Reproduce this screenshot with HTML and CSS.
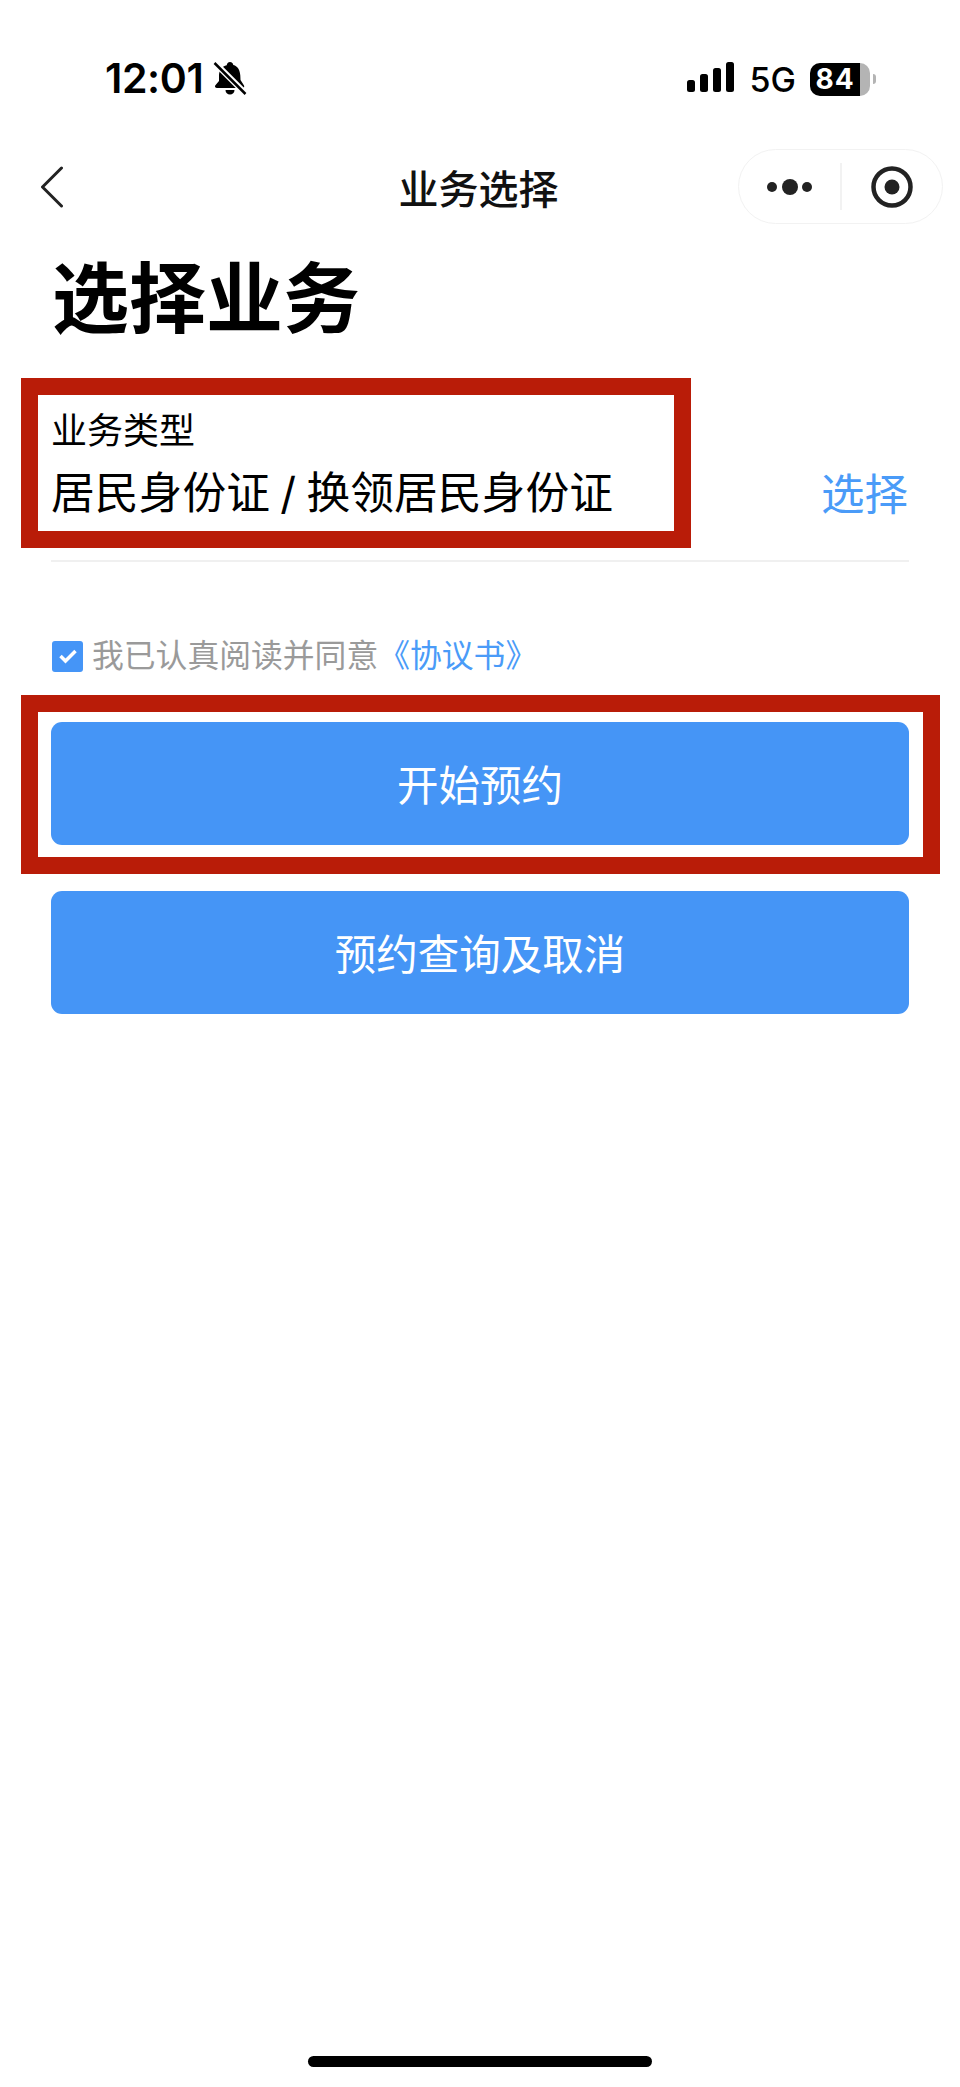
FILE: index.html
```html
<!DOCTYPE html>
<html lang="zh-CN">
<head>
<meta charset="utf-8">
<title>业务选择</title>
<link rel="stylesheet" href="styles.css">
</head>
<body>
<div class="page">
  <header class="status">
    <div class="status-left">
      <span class="time">12:01</span>
      <svg class="bell" width="34" height="35" viewBox="0 0 34 35">
        <path class="fill" d="M17 1c2 0 3 1.400 3.300 3 4.700 1.300 6.700 5.500 7 10.500l.2 4.500 3.500 5.500c.6 1.200 0 2.500-1.500 2.500H4c-1.500 0-2.500-1.300-1.800-2.500L6 20v-6c.3-5 3-8.600 7.700-9.800C14 2.400 15 1 17 1z"/>
        <path class="fill" d="M12.500 29h9c0 2.800-2 4.600-4.500 4.600s-4.500-1.800-4.500-4.600z"/>
        <path class="cut" d="M-1 -1 34 34"/>
        <path class="slash" d="M1.500 2 32.500 33"/>
      </svg>
    </div>
    <div class="status-right">
      <svg class="signal" width="48" height="30" viewBox="0 0 48 30">
        <rect x="0" y="18" width="8" height="12" rx="2.500"/>
        <rect x="13" y="12" width="8" height="18" rx="2.500"/>
        <rect x="26" y="6" width="8" height="24" rx="2.500"/>
        <rect x="39" y="0" width="8" height="30" rx="2.500"/>
      </svg>
      <span class="net">5G</span>
      <div class="battery">
        <div class="battery-body"><span class="battery-level">84</span></div>
        <span class="battery-tip"></span>
      </div>
    </div>
  </header>

  <nav class="nav">
    <div class="nav-left">
      <svg class="back" width="24" height="42" viewBox="0 0 24 42">
        <path d="M21.500 2 2.500 21 21.500 40"/>
      </svg>
    </div>
    <div class="nav-title">业务选择</div>
    <div class="nav-right">
      <div class="capsule">
        <div class="capsule-cell capsule-cell-menu">
          <svg width="46" height="20" viewBox="0 0 46 20">
            <circle cx="5" cy="10" r="5"/>
            <circle cx="23" cy="10" r="8"/>
            <circle cx="40" cy="10" r="5"/>
          </svg>
        </div>
        <span class="capsule-divider"></span>
        <div class="capsule-cell">
          <svg class="target" width="42" height="42" viewBox="0 0 42 42">
            <circle class="ring" cx="21" cy="21" r="18.500"/>
            <circle cx="21" cy="21" r="7.500"/>
          </svg>
        </div>
      </div>
    </div>
  </nav>

  <main class="content">
    <h1 class="heading">选择业务</h1>

    <section class="field">
      <div class="field-main">
        <div class="field-label">业务类型</div>
        <div class="field-value">居民身份证 / 换领居民身份证</div>
      </div>
      <a class="field-action">选择</a>
    </section>

    <label class="agree">
      <span class="checkbox">
        <svg width="20" height="16" viewBox="0 0 20 16"><path d="M2.500 8 7.500 13 17.500 3"/></svg>
      </span>
      <span class="agree-text">我已认真阅读并同意<a class="agree-link">《协议书》</a></span>
    </label>

    <button class="btn btn-first">开始预约</button>
    <button class="btn btn-second">预约查询及取消</button>
  </main>

  <div class="home-bar"></div>

  <div class="mark mark-field"></div>
  <div class="mark mark-button"></div>
</div>
</body>
</html>
```

FILE: styles.css
```css
* { box-sizing: border-box; }

html, body {
  margin: 0;
  padding: 0;
  background: #fff;
}

.page {
  position: relative;
  width: 960px;
  height: 2087px;
  overflow: hidden;
  display: flex;
  flex-direction: column;
  background: #fff;
  color: #000;
  font-family: "Inter", "Noto Sans CJK SC", sans-serif;
}

/* status bar */
.status {
  height: 149px;
  flex: none;
  display: flex;
  justify-content: space-between;
  align-items: flex-start;
  padding: 58px 84px 0 105px;
}

.status-left,
.status-right {
  display: flex;
  align-items: center;
  height: 40px;
}

.time {
  font-size: 41px;
  font-weight: 600;
  line-height: 40px;
  letter-spacing: -0.4px;
}

.bell {
  margin-left: 10px;
}

.bell .fill { fill: #000; }
.bell .cut { stroke: #fff; stroke-width: 6; fill: none; }
.bell .slash { stroke: #000; stroke-width: 2.500; fill: none; }

.signal {
  fill: #000;
  margin-top: -2px;
}

.net {
  font-family: "Inter", sans-serif;
  font-size: 34px;
  font-weight: 500;
  line-height: 40px;
  margin-left: 15px;
  margin-top: 4px;
}

.battery {
  display: flex;
  align-items: center;
  margin-left: 14px;
  margin-top: 2px;
}

.battery-body {
  width: 60px;
  height: 33px;
  border-radius: 10px;
  background: linear-gradient(to right, #000 50px, #b4b4b4 50px);
  overflow: hidden;
}

.battery-level {
  display: block;
  width: 50px;
  text-align: center;
  color: #fff;
  font-size: 28px;
  font-weight: 700;
  line-height: 33px;
  letter-spacing: 1px;
}

.battery-tip {
  width: 3px;
  height: 10px;
  margin-left: 3px;
  background: #b4b4b4;
  border-radius: 0 3px 3px 0;
}

/* mini program nav */
.nav {
  height: 75px;
  flex: none;
  display: grid;
  grid-template-columns: 1fr auto 1fr;
  align-items: center;
  padding: 0 17px 0 40px;
}

.back {
  display: block;
  fill: none;
  stroke: #222;
  stroke-width: 3;
  stroke-linecap: round;
  stroke-linejoin: round;
}

.nav-title {
  font-size: 40px;
  font-weight: 500;
  line-height: 69px;
  padding-top: 6px;
  color: #111;
  margin-right: 26px;
}

.nav-right {
  display: flex;
  justify-content: flex-end;
}

.capsule {
  width: 205px;
  height: 75px;
  border: 1px solid #f2f2f2;
  border-radius: 38px;
  display: flex;
  align-items: center;
}

.capsule-cell {
  flex: 1;
  display: flex;
  justify-content: center;
  align-items: center;
}

.capsule-cell-menu {
  padding-left: 1px;
}

.capsule-cell svg {
  display: block;
  fill: #222;
}

.capsule-divider {
  width: 2px;
  height: 47px;
  background: #f2f2f2;
}

.capsule-cell .ring {
  fill: none;
  stroke: #222;
  stroke-width: 4.500;
}

/* content */
.content {
  flex: 1;
  display: flex;
  flex-direction: column;
  padding: 0 51px;
}

.heading {
  margin: 25px 0 0 1px;
  font-size: 77px;
  font-weight: 700;
  line-height: 100px;
}

.field {
  margin-top: 64px;
  height: 149px;
  display: flex;
  justify-content: space-between;
  align-items: flex-start;
  border-bottom: 2px solid #f0f0f0;
}

.field-label {
  font-size: 36px;
  line-height: 50px;
  color: #000;
  margin-top: -7px;
}

.field-value {
  font-size: 43.800px;
  line-height: 62px;
  margin-top: 7px;
  color: #000;
  white-space: nowrap;
  word-spacing: -2px;
}

.field-action {
  margin-top: 50px;
  margin-right: 1px;
  font-size: 43.500px;
  line-height: 62px;
  color: #4a9bf8;
}

.agree {
  margin-top: 70px;
  display: flex;
  align-items: center;
  height: 48px;
  padding-left: 1px;
}

.checkbox {
  width: 31px;
  height: 31px;
  border-radius: 3px;
  background: #4595f7;
  display: flex;
  justify-content: center;
  align-items: center;
}

.checkbox svg {
  display: block;
  fill: none;
  stroke: #fff;
  stroke-width: 3.500;
}

.agree-text {
  margin-left: 9px;
  font-size: 31.800px;
  line-height: 48px;
  color: #9a9a9a;
}

.agree-link {
  color: #4a9bf8;
}

.btn {
  display: block;
  width: 858px;
  height: 123px;
  border: 0;
  border-radius: 11px;
  background: #4595f6;
  color: #fff;
  font-family: inherit;
  font-size: 41.500px;
  padding: 0 0 2px;
}

.btn-first { margin-top: 42px; }
.btn-second { margin-top: 46px; }

/* home indicator */
.home-bar {
  position: absolute;
  left: 308px;
  top: 2056px;
  width: 344px;
  height: 11px;
  border-radius: 6px;
  background: #000;
}

/* red annotation frames drawn over the screenshot */
.mark {
  position: absolute;
  border: 17px solid #b91c08;
}

.mark-field {
  left: 21px;
  top: 378px;
  width: 670px;
  height: 170px;
}

.mark-button {
  left: 21px;
  top: 695px;
  width: 919px;
  height: 179px;
}
```
